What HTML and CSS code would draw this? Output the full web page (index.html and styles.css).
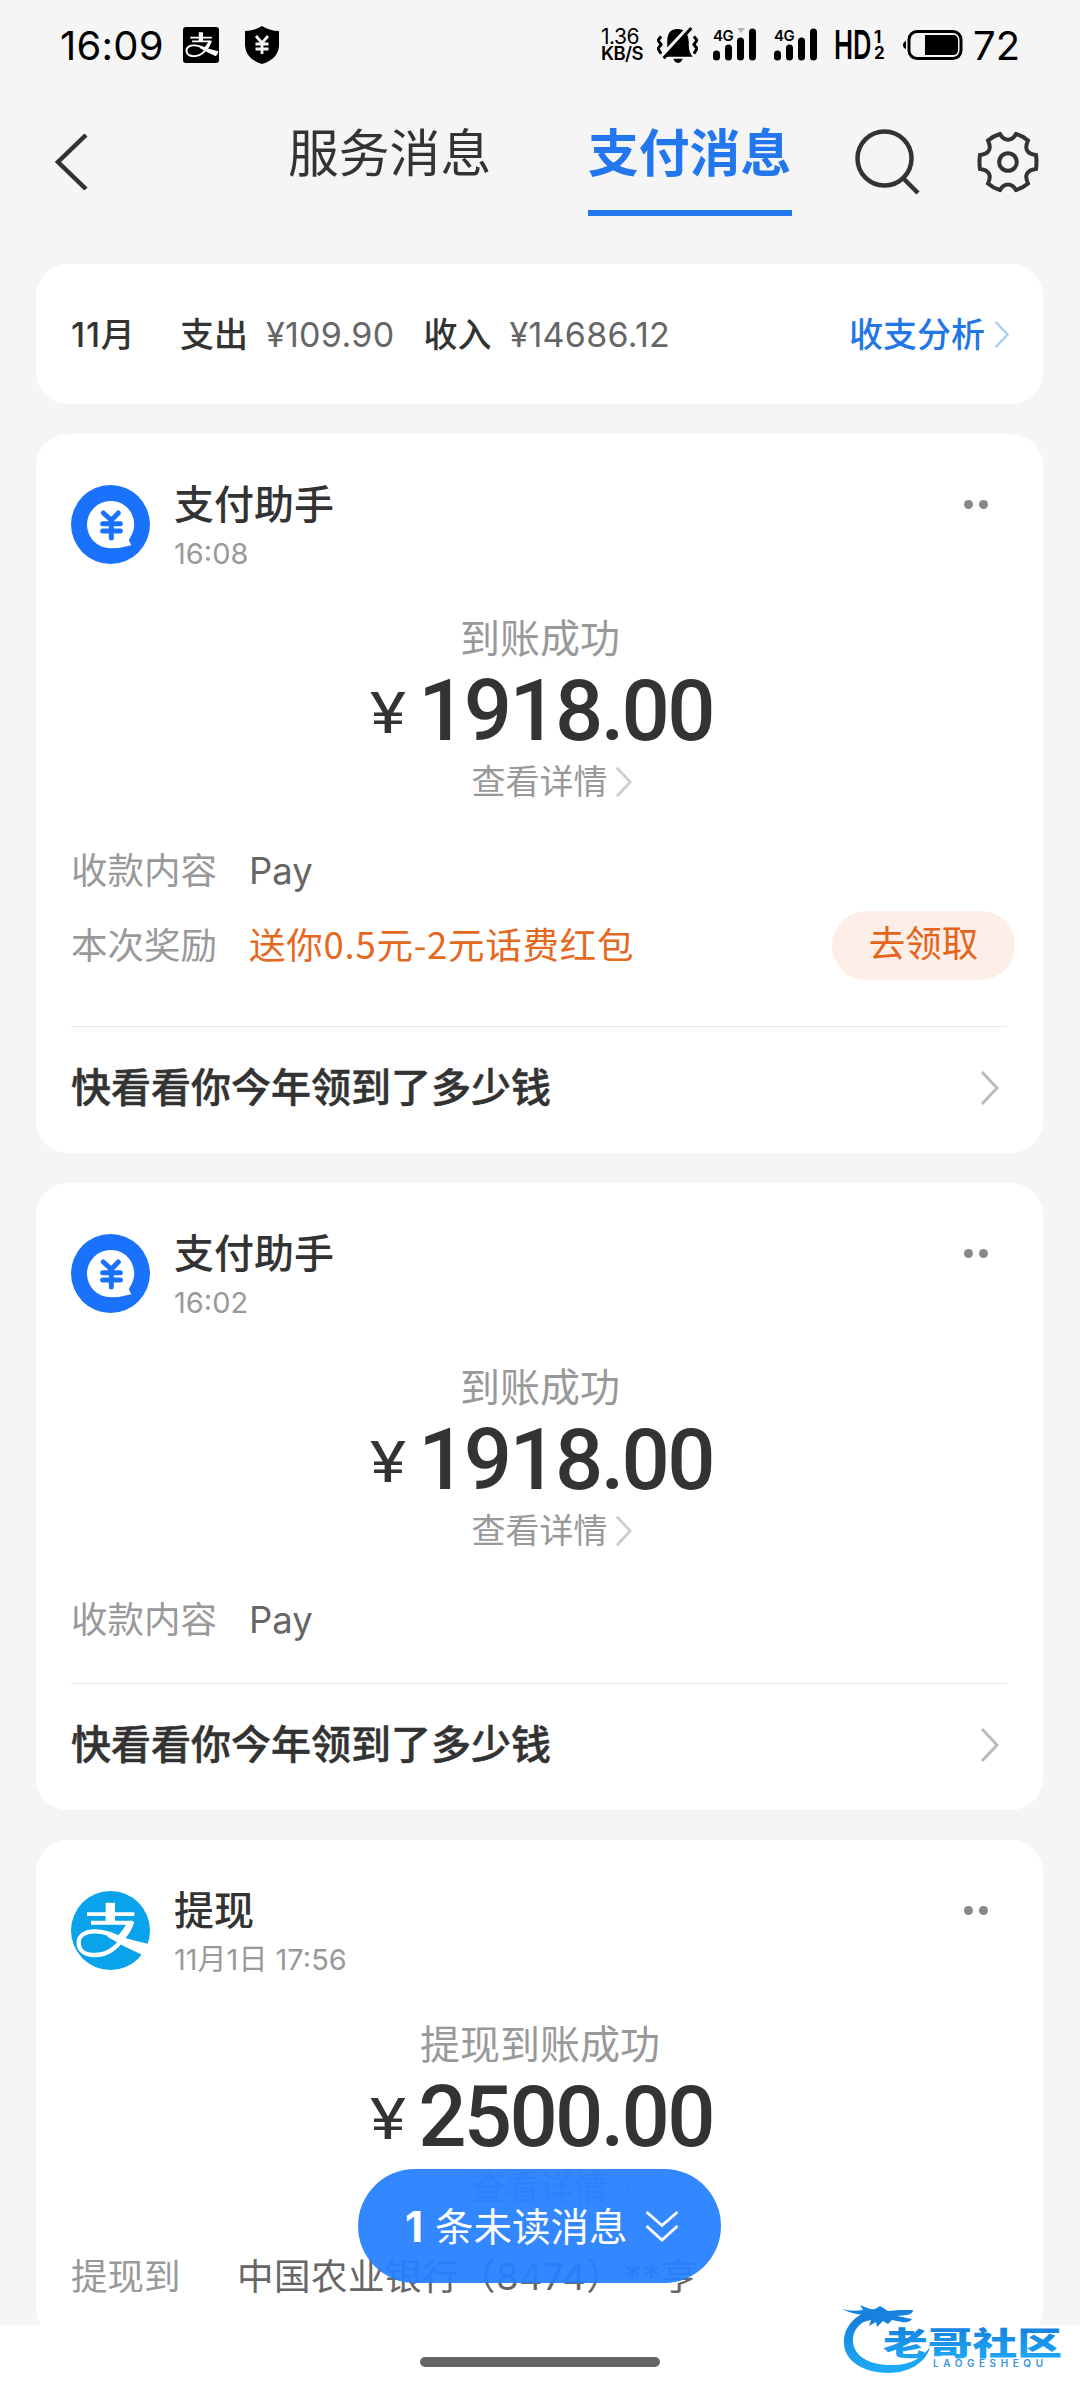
FILE: index.html
```html
<!DOCTYPE html>
<html lang="zh-CN">
<head>
<meta charset="utf-8">
<title>支付消息</title>
<link rel="stylesheet" href="styles.css">
</head>
<body>
<svg class="defs" aria-hidden="true">
  <symbol id="zhi" viewBox="0 0 237 237">
    <path d="M48 64H190V75H48ZM60 89H186V101H60ZM104 35H132V98H104Z"/>
    <path d="M178 92C162 150 122 192 72 192C40 192 23 177 23 155C23 132 45 120 74 121C105 122 130 134 160 148" fill="none" stroke="currentColor" stroke-width="13"/>
    <path d="M168 92H190C182 118 170 135 158 146L138 137C152 122 162 108 168 92ZM110 124Q160 143 233 159Q230 176 216 193Q160 168 110 138Z"/>
  </symbol>
  <symbol id="helper" viewBox="0 0 237 237">
    <circle cx="118.500" cy="118.500" r="118.500" fill="#1a72fc"/>
    <path d="M119 48A70 70 0 0 1 177 158Q170 166 181 181Q150 190 119 190A71 71 0 0 1 119 48Z" fill="#fff"/>
    <path d="M97 84L121 106L142 84M121 106V159M95 116H148M95 138H148" fill="none" stroke="#1a72fc" stroke-width="15" stroke-linecap="round"/>
  </symbol>
  <symbol id="signal" viewBox="0 0 44 34">
    <path d="M3.500 26V29M15.500 20V29M27.500 13V29M39.500 4V29" stroke="#000" stroke-width="7" stroke-linecap="round"/>
  </symbol>
  <symbol id="chev" viewBox="0 0 20 36">
    <path d="M2 2L17 18L2 34" fill="none" stroke="currentColor" stroke-width="3"/>
  </symbol>
</svg>

<header class="status">
  <span class="clock">16:09</span>
  <svg class="app" viewBox="0 0 36 36"><rect width="36" height="36" rx="3"/><use href="#zhi" x="0" y="0" width="36" height="36" color="#fff" fill="#fff"/></svg>
  <svg class="shield" viewBox="0 0 34 38"><path d="M17 0Q25 5 34 5V20Q33 33 17 38Q1 33 0 20V5Q9 5 17 0Z"/><path d="M11 10L17 17L23 10M17 17V28M10.500 18H23.500M10.500 23H23.500" fill="none" stroke="#f5f5f5" stroke-width="2.800"/></svg>
  <span class="speed"><span>1.36</span><b>KB/S</b></span>
  <svg class="bell" viewBox="0 0 40 36"><path d="M5 29Q10 25 10 18V14Q10 2 20 2Q30 2 31 14V18Q31 25 35 29ZM16 31H25Q24 35 20.500 35Q17 35 16 31Z"/><path d="M31 0L2 31" stroke="#f5f5f5" stroke-width="3.500"/><path d="M33.500 1L6.500 30.500" stroke="#000" stroke-width="3"/><path d="M4 9L1 13L4 17L1 21L4 26M36 9L39 13L36 17L39 21L36 26" fill="none" stroke="#000" stroke-width="2.800"/></svg>
  <span class="net net-a"><i>4G</i><svg viewBox="0 0 44 34"><use href="#signal"/><path d="M24 0H32L28 5Z" fill="#b5b5b5"/></svg></span>
  <span class="net net-b"><i>4G</i><svg viewBox="0 0 44 34"><use href="#signal"/></svg></span>
  <span class="hd"><b>HD</b></span>
  <span class="sims"><b>1</b><b>2</b></span>
  <svg class="battery" viewBox="0 0 60 30"><rect x="6" y="1.500" width="52" height="27" rx="8" fill="none" stroke="#000" stroke-width="3"/><path d="M22 5H50Q55 5 55 10V20Q55 25 50 25H22ZM3 11V19Q0 18 0 15Q0 12 3 11Z"/></svg>
  <span class="level">72</span>
</header>

<nav class="top">
  <svg class="back" viewBox="0 0 33 56"><path d="M31 1L3 28L31 55" fill="none" stroke="#333" stroke-width="4.500"/></svg>
  <span class="tab">服务消息</span>
  <span class="tab active">支付消息</span>
  <svg class="search" viewBox="0 0 66 66"><circle cx="29.500" cy="29.500" r="27" fill="none" stroke="#333" stroke-width="4.500"/><path d="M48 49L63 64" stroke="#333" stroke-width="4.500"/></svg>
  <svg class="gear" viewBox="-31 -31 62 62"><path d="M-8 -28C-4 -20.500 4 -20.500 8 -28Q15 -26 20 -21.500C16 -13 19 -8 28 -7Q29 0 28 7C19 8 16 13 20 21.500Q15 26 8 28C4 20.500 -4 20.500 -8 28Q-15 26 -20 21.500C-16 13 -19 8 -28 7Q-29 0 -28 -7C-19 -8 -16 -13 -20 -21.500Q-15 -26 -8 -28Z" fill="none" stroke="#333" stroke-width="4"/><circle r="8.800" fill="none" stroke="#333" stroke-width="4"/></svg>
</nav>

<main class="feed">
  <section class="card summary">
    <b class="month">11月</b>
    <b>支出</b><span class="sum out">¥109.90</span>
    <b>收入</b><span class="sum">¥14686.12</span>
    <a class="analysis">收支分析<svg viewBox="0 0 20 36"><use href="#chev"/></svg></a>
  </section>

  <article class="card">
    <div class="head">
      <svg class="avatar"><use href="#helper"/></svg>
      <div class="who"><b>支付助手</b><time>16:08</time></div>
      <div class="dots"><i></i><i></i></div>
    </div>
    <p class="state">到账成功</p>
    <p class="amount"><i>¥</i><b>1918.00</b></p>
    <p class="detail">查看详情<svg><use href="#chev"/></svg></p>
    <div class="rows rows-reward">
      <div class="row"><span class="key">收款内容</span><span class="val">Pay</span></div>
      <div class="row"><span class="key">本次奖励</span><span class="val reward">送你0.5元-2元话费红包</span><span class="claim">去领取</span></div>
    </div>
    <div class="foot"><b>快看看你今年领到了多少钱</b><svg><use href="#chev"/></svg></div>
  </article>

  <article class="card">
    <div class="head">
      <svg class="avatar"><use href="#helper"/></svg>
      <div class="who"><b>支付助手</b><time>16:02</time></div>
      <div class="dots"><i></i><i></i></div>
    </div>
    <p class="state">到账成功</p>
    <p class="amount"><i>¥</i><b>1918.00</b></p>
    <p class="detail">查看详情<svg><use href="#chev"/></svg></p>
    <div class="rows">
      <div class="row"><span class="key">收款内容</span><span class="val">Pay</span></div>
    </div>
    <div class="foot"><b>快看看你今年领到了多少钱</b><svg><use href="#chev"/></svg></div>
  </article>

  <article class="card last">
    <div class="head">
      <svg class="avatar" viewBox="0 0 237 237"><circle cx="118.500" cy="118.500" r="118.500" fill="#08a3ea"/><use href="#zhi" fill="#fff" color="#fff"/></svg>
      <div class="who"><b>提现</b><time>11月1日 17:56</time></div>
      <div class="dots"><i></i><i></i></div>
    </div>
    <p class="state">提现到账成功</p>
    <p class="amount"><i>¥</i><b>2500.00</b></p>
    <p class="detail">查看详情<svg><use href="#chev"/></svg></p>
    <div class="rows">
      <div class="row"><span class="key key-short">提现到</span><span class="val account">中国农业银行（8474）**亨</span></div>
    </div>
  </article>
</main>

<footer class="system"><div class="home"></div></footer>

<div class="unread"><b>1</b><span>条未读消息</span><svg viewBox="0 0 34 34"><path d="M1.500 2L17 15.500L32.500 2M1.500 16L17 30L32.500 16" fill="none" stroke="#fff" stroke-width="2.800"/></svg></div>

<svg class="brand" viewBox="0 0 224 80">
  <defs><linearGradient id="g" x1="0" y1="0" x2="0" y2="1"><stop offset="0" stop-color="#1277d8"/><stop offset="1" stop-color="#1fadf8"/></linearGradient></defs>
  <path d="M30 15C12 20 3 34 4 48C5 66 25 77 48 77C70 77 86 66 90 51C82 62 70 69 53 69C30 70 14 60 13 46C12 34 20 26 32 22Z" fill="url(#g)"/>
  <path d="M2 13Q12 16 23 14L20 9Q30 14 35 13L40 10L48 15L60 14L73 14Q73 18 67 19L57 20L72 23Q69 27 62 26L52 24L48 28L43 25L37 31L36 26L29 30L31 24L23 26L27 19Q14 19 2 13Z" fill="#1682dd"/>
  <text class="brand-name" x="43" y="58.500" textLength="179" lengthAdjust="spacingAndGlyphs" fill="url(#g)">老哥社区</text>
  <text class="brand-sub" x="93" y="70.500" textLength="110" lengthAdjust="spacing" fill="#3a94dc">LAOGESHEQU</text>
</svg>
</body>
</html>
```
FILE: styles.css
```css
* { box-sizing: border-box; }
body {
  margin: 0; width: 1080px; height: 2400px; position: relative; overflow: hidden;
  background: #f5f5f5; color: #333; display: flex; flex-direction: column;
  font-family: Inter, "Noto Sans CJK SC", sans-serif;
}
p { margin: 0; }
i { font-style: normal; }
b { font-weight: 500; }
svg { display: block; flex: none; }
.defs { position: absolute; width: 0; height: 0; }

.status { height: 90px; flex: none; display: flex; align-items: center; padding-left: 60px; color: #000; white-space: nowrap; }
.clock { width: 123px; font-size: 40px; line-height: 40px; padding-top: 2px; letter-spacing: 0.2px; }
.app { width: 36px; height: 36px; }
.shield { width: 34px; height: 38px; margin-left: 26px; }
.speed { width: 56px; margin-left: 322px; display: flex; flex-direction: column; font-size: 21px; line-height: 16px; letter-spacing: -0.5px; }
.speed b { font-size: 18.500px; font-weight: 600; letter-spacing: -0.6px; }
.bell { width: 41px; height: 37px; margin-left: 0; }
.net { position: relative; width: 44px; height: 34px; }
.net svg { width: 44px; height: 34px; }
.net i { position: absolute; left: 0; top: 0; font-size: 15px; line-height: 15px; font-weight: 600; letter-spacing: -0.5px; }
.net-a { margin-left: 15px; }
.net-b { margin-left: 17px; }
.hd { width: 36px; margin-left: 16px; font-size: 40px; line-height: 40px; }
.hd b { display: inline-block; font-weight: 600; transform: scaleX(.64); transform-origin: 0 50%; }
.sims { width: 9px; margin-left: 4px; display: flex; flex-direction: column; font: 17px/16px Inter, sans-serif; }
.sims b { font-weight: 700; }
.battery { width: 60px; height: 30px; margin-left: 20px; }
.level { margin-left: 10px; font-size: 40px; line-height: 40px; padding-top: 1px; }

.top { height: 174px; flex: none; display: flex; align-items: flex-start; padding-left: 55px; }
.back { width: 33px; height: 56px; margin-top: 44px; }
.tab { width: 204px; height: 126px; margin-left: 200px; padding-top: 34px; font-size: 50.800px; line-height: 60px; white-space: nowrap; }
.active { margin-left: 96px; color: #2277ee; font-weight: 600; background: linear-gradient(#2277ee, #2277ee) 0 120px / 204px 6px no-repeat; }
.search { width: 66px; height: 66px; margin: 39px 0 0 63px; }
.gear { width: 62px; height: 62px; margin: 41px 0 0 56px; }

.feed { height: 2061px; flex: none; overflow: hidden; padding: 0 37px 0 36px; display: flex; flex-direction: column; gap: 30px; }
.card { flex: none; background: #fff; border-radius: 32px; padding: 0 36px 0 35px; }
.summary { height: 140px; display: flex; align-items: center; font-size: 34px; line-height: 34px; white-space: nowrap; padding-top: 1px; }
.month { width: 109px; letter-spacing: 0.8px; }
.sum { color: #666; margin-left: 18px; letter-spacing: 0.3px; }
.out { margin-right: 29px; }
.analysis { margin-left: auto; color: #2277e6; font-weight: 500; display: flex; align-items: center; }
.analysis svg { width: 16px; height: 29px; margin: 0 -3px 0 9px; color: #a9cdf5; }

.head { height: 180px; padding-top: 51px; display: flex; }
.avatar { width: 79px; height: 79px; }
.who { margin-left: 24px; display: flex; flex-direction: column; gap: 14px; }
.who b { font-size: 40px; line-height: 40px; }
.who time { font-size: 29px; line-height: 30px; color: #999; }
.dots { display: flex; gap: 6px; margin: 15px 19px 0 auto; }
.dots i { width: 9px; height: 9px; border-radius: 50%; background: #888; }
.state { height: 50px; padding-left: 2px; text-align: center; font-size: 40px; line-height: 50px; color: #999; }
.amount { height: 93px; padding-left: 5px; display: flex; justify-content: center; align-items: center; white-space: nowrap; font-family: Roboto, sans-serif; }
.amount i { width: 48px; font-size: 58px; line-height: 80px; padding-top: 5px; transform: scaleX(1.18); transform-origin: 0 50%; }
.amount b { font-size: 85px; line-height: 80px; letter-spacing: -2.700px; padding-top: 1px; }
.detail { height: 50px; display: flex; align-items: center; justify-content: center; padding-left: 26px; font-size: 34px; line-height: 50px; color: #999; }
.detail svg { width: 18px; height: 32px; margin-left: 7px; color: #ccc; }
.rows { padding: 26px 0; }
.rows-reward { padding-bottom: 43px; }
.row { height: 75px; display: flex; align-items: center; font-size: 36.500px; line-height: 50px; white-space: nowrap; }
.key { width: 178px; color: #999; }
.key-short { width: 166px; }
.val { color: #666; }
.account { letter-spacing: 0.5px; }
.reward { color: #e5681f; font-family: "Noto Sans CJK SC", sans-serif; letter-spacing: 0.75px; margin-top: -3px; }
.claim { width: 183px; height: 69px; border-radius: 35px; background: #fdeee7; color: #e5641c; margin: 0 -8px 0 auto; text-align: center; line-height: 67px; }
.foot { height: 127px; border-top: 1.500px solid #e8e8e8; padding-bottom: 4px; display: flex; align-items: center; justify-content: space-between; font-size: 40px; line-height: 50px; }
.foot b { -webkit-text-stroke: 0.5px #333; }
.foot svg { width: 20px; height: 36px; margin-right: 7px; color: #bbb; }
.last { height: 500px; }

.system { height: 75px; flex: none; background: #fff; display: flex; justify-content: center; padding-top: 32px; }
.home { width: 240px; height: 10px; border-radius: 5px; background: #666; }

.unread { position: absolute; left: 358px; top: 2169px; width: 363px; height: 114px; border-radius: 57px; background: rgba(38, 127, 255, .94); color: #fff; display: flex; align-items: center; padding: 1px 0 0 47px; font-size: 38.500px; line-height: 50px; white-space: nowrap; }
.unread b { width: 30px; font-size: 42px; font-weight: 700; }
.unread svg { width: 34px; height: 34px; margin-left: 17px; }

.brand { position: absolute; left: 840px; top: 2296px; width: 224px; height: 80px; }
.brand-name { font: 900 32px "Noto Sans CJK SC", sans-serif; }
.brand-sub { font: 600 10px Inter, sans-serif; }
```
